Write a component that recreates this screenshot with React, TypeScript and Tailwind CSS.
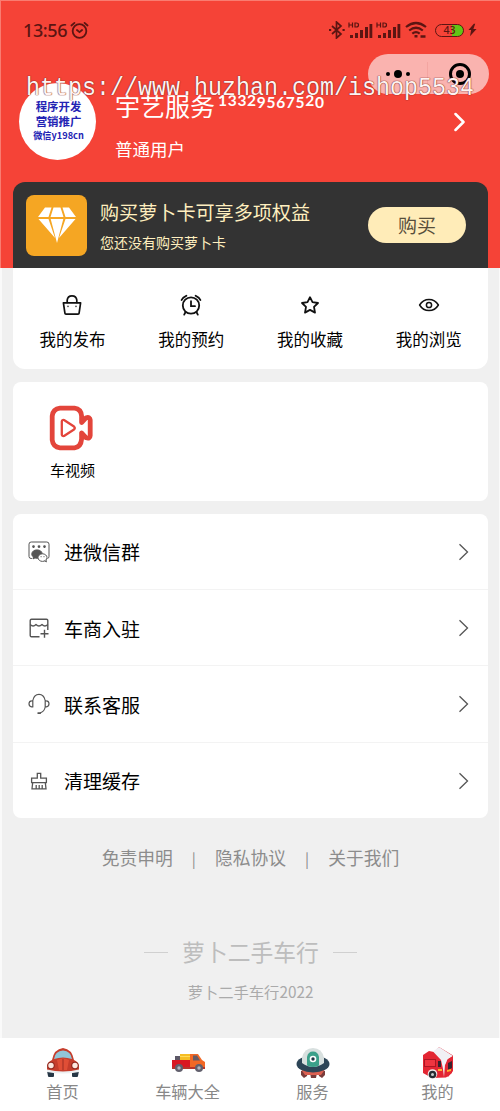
import type { ReactNode } from "react";

interface Entry {
  label: string;
  icon: ReactNode;
}

const shortcuts: Entry[] = [
  {
    label: "我的发布",
    icon: (
      <svg viewBox="0 0 22 22" className="w-[22px] h-[22px]" fill="none" stroke="#111" strokeWidth="1.7" strokeLinejoin="round" strokeLinecap="round">
        <path d="M2.4 8.800h17.200l-1.500 10.400q-.1 1-1.100 1H5q-1 0-1.100-1z" />
        <path d="M6.200 8.400V6.200Q6.600 1.800 11 1.800t4.800 4.400v2.200" />
        <path d="M7 12.200v.3M15 12.200v.3" strokeWidth="1.300" />
      </svg>
    ),
  },
  {
    label: "我的预约",
    icon: (
      <svg viewBox="0 0 22 22" className="w-[22px] h-[22px]" fill="none" stroke="#111" strokeWidth="1.8" strokeLinecap="round">
        <circle cx="11" cy="11.500" r="8.200" />
        <path d="M11 7.200v5h4M5.300 18.500 4.200 20.600M16.700 18.500l1.100 2.100M1.600 6 3.300 3.700 6.400 1.800M20.400 6l-1.700-2.300-3.100-1.900" />
      </svg>
    ),
  },
  {
    label: "我的收藏",
    icon: (
      <svg viewBox="0 0 22 22" className="w-[22px] h-[22px]" fill="none" stroke="#111" strokeWidth="1.800" strokeLinejoin="round">
        <path d="m11 3.200 2.500 5 5.500.8-4 3.900 1 5.700-5-2.700-5 2.700 1-5.700L3 9l5.500-.8z" />
      </svg>
    ),
  },
  {
    label: "我的浏览",
    icon: (
      <svg viewBox="0 0 22 22" className="w-[22px] h-[22px]" fill="none" stroke="#111" strokeWidth="1.500">
        <path d="M1.600 11Q5 5.400 11 5.400T20.400 11Q17 16.600 11 16.600T1.600 11z" strokeLinejoin="round" />
        <circle cx="11" cy="11" r="2.600" />
      </svg>
    ),
  },
];

const menu: Entry[] = [
  {
    label: "进微信群",
    icon: (
      <svg viewBox="0 0 22 22" className="w-[22px] h-[22px]" fill="none" stroke="#555" strokeWidth="1">
        <path d="M4 17.500H3.200Q1 17.500 1 15.400V3.200Q1 1 3.200 1h15.600Q21 1 21 3.200v12.200q0 1.800-1.500 2.100" />
        <path d="M5.500 4.300v2.600M4.200 5.600h2.600M11 4.300v2.600M9.700 5.600h2.600M16.500 4.300v2.600M15.200 5.600h2.600" strokeWidth="1.500" />
        <path d="M3.800 13.200C3.800 10.600 6 8.900 9 8.900s5.200 1.700 5.200 4c-3 0-4.700 1.600-4.500 4.400-1 .1-2-.1-2.700-.4l-2 1 .4-1.800c-1-.8-1.600-1.800-1.600-2.900z" fill="#555" />
        <ellipse cx="14.500" cy="16.600" rx="4.500" ry="3.800" fill="#fff" />
        <path d="m16.500 19.700 1.900 1.200-.4-2" fill="#fff" />
        <path d="M12.600 15.700h1M15.500 15.700h1" />
      </svg>
    ),
  },
  {
    label: "车商入驻",
    icon: (
      <svg viewBox="0 0 22 22" className="w-[22px] h-[22px]" fill="none" stroke="#555" strokeWidth="1.400" strokeLinejoin="round">
        <path d="M11.500 19.700H3.500q-1.300 0-1.300-1.300V3.600q0-1.300 1.300-1.300h15q1.300 0 1.300 1.300V13" />
        <path d="M2.200 7.500q2.900 3 5.800 0 2.900 3 6 0 2.900 3 5.800 0M16.500 12.700v8M12.500 16.700h8" />
      </svg>
    ),
  },
  {
    label: "联系客服",
    icon: (
      <svg viewBox="0 0 22 22" className="w-[22px] h-[22px]" fill="none" stroke="#555" strokeWidth="1.200" strokeLinecap="round">
        <path d="M4.800 7.500Q6 1.400 11 1.400t6.200 6.100M4.800 7.500v6.400H3.600Q1 13.500 1 10.800t2.600-3zM17.200 7.500v6.400h1.200q2.600-.4 2.600-3.100t-2.600-3zM17.200 14q-.9 4.500-4.700 5.700" strokeLinejoin="round" />
        <path d="M10.200 20.100h2" strokeWidth="1.900" />
      </svg>
    ),
  },
  {
    label: "清理缓存",
    icon: (
      <svg viewBox="0 0 22 22" className="w-[22px] h-[22px]" fill="none" stroke="#555" strokeWidth="1.300">
        <path d="M9.300 8.100V3.400h3.400v4.700h5.700v4.500H3.600V8.100zM4.700 12.600l-.7 6.200h14l-.7-6.200M8.200 18.800V15M11.200 18.800V15M14.200 18.800V15" />
      </svg>
    ),
  },
];

const tabs: Entry[] = [
  {
    label: "首页",
    icon: (
      <svg viewBox="0 0 36 32" className="w-9 h-8">
        <path d="M2 24h7v5q0 1-1 1H4q-1 0-1-1zM27 24h7l-1 5q0 1-1 1h-4q-1 0-1-1z" fill="#263746" />
        <path d="M7 13Q9 2 18 1q9 1 11 12 5 2 5 8v4H2v-4q0-6 5-8z" fill="#c63d2c" />
        <path d="M9 12q1-8 9-8.500 8 .5 9 8.500-9-3-18 0z" fill="#91c5d8" />
        <path d="M12 13q6-3 12 0l-2 10h-8z" fill="#e04e36" />
        <path d="M18 12v11" stroke="#9c2c22" />
        <circle cx="6" cy="18.500" r="3.800" fill="#8f281f" />
        <circle cx="30" cy="18.500" r="3.800" fill="#8f281f" />
        <circle cx="6" cy="18.500" r="2.700" fill="#fce8df" />
        <circle cx="30" cy="18.500" r="2.700" fill="#fce8df" />
        <path d="M2 22.600q16 4 32 0v2.300q-16 3-32 0z" fill="#edf0f2" />
      </svg>
    ),
  },
  {
    label: "车辆大全",
    icon: (
      <svg viewBox="0 0 36 32" className="w-9 h-8">
        <path d="M5 9h6v6H5z" fill="#5c5867" />
        <path d="M10 7h10v8H10z" fill="#f6bd23" />
        <path d="M10 9.500h10" stroke="#ffdc59" />
        <path d="M2 13h19v9H2z" fill="#d91822" />
        <path d="M20 7h8l4 6 3 2v7H20z" fill="#f26825" />
        <path d="M23 8.500h4l3 5h-7z" fill="#665b65" />
        <path d="M2 20h33v2H2z" fill="#b7352b" />
        <circle cx="9" cy="21" r="4" fill="#62606d" />
        <circle cx="29" cy="21" r="4" fill="#62606d" />
        <circle cx="9" cy="21" r="1.700" fill="#b3b4bc" />
        <circle cx="29" cy="21" r="1.700" fill="#b3b4bc" />
      </svg>
    ),
  },
  {
    label: "服务",
    icon: (
      <svg viewBox="0 0 36 32" className="w-9 h-8">
        <path d="M6 24h7l-1 5-3 2-3-3zM15 26h7l-1 5h-5zM23 24h7v4l-3 3-3-2z" fill="#793c3b" />
        <path d="M5 21h26l-5 7H10z" fill="#dc6051" />
        <ellipse cx="18" cy="17" rx="16.500" ry="8.500" fill="#2d4557" />
        <path d="M7 16V11Q9 1 18 1t11 10v5q-11 8-22 0z" fill="#d8e0df" />
        <path d="M12 18.500V10q1-5.500 6-5.500t6 5.500v8.500q-6 3-12 0z" fill="#3ba08a" />
        <circle cx="18" cy="12" r="3.300" fill="#fff" />
        <circle cx="18" cy="12" r="1.700" fill="#203747" />
      </svg>
    ),
  },
  {
    label: "我的",
    icon: (
      <svg viewBox="0 0 36 32" className="w-9 h-8">
        <path d="m3 8 6-4 5 1 5-5 14 8.500-1 17.500-6 4.500-14 .5-9-5z" fill="#e32633" />
        <path d="m13 4.500 6-4.500 14 9-5 3-3 6-1 12q-1-10-3-17z" fill="#f1f0f5" />
        <path d="M4 12h12v8H4z" fill="#ad1624" />
        <path d="M5 13h10v6H5z" fill="#ef3540" />
        <path d="m27 13 6-4v15l-5 6-3-3z" fill="#e32633" />
        <path d="m28 16 4-2v7l-4 2z" fill="#38232f" />
        <path d="M18 14h3v6h-3z" fill="#38232f" />
        <path d="M18 22h4v2h-4zM27 23l4-1v2l-4 1z" fill="#ffb12d" />
        <circle cx="12.500" cy="27" r="4.800" fill="#f5eced" />
        <circle cx="12.500" cy="27.500" r="3.800" fill="#262d32" />
        <circle cx="12.500" cy="27.500" r="1.500" fill="#c6cdce" />
      </svg>
    ),
  },
];

const Signal = () => (
  <svg viewBox="0 0 25 18" className="w-[25px] h-[18px]" fill="#5b1512">
    <path d="M2 14h3v3H2zM7 12h3v5H7zM12 9h3v8h-3zM17 6h3v11h-3zM21.500 3h2.800v14h-2.800z" />
    <path d="M1 1.500v5M4.500 1.500v5M1 4h3.500M7 2v4h1.200q2.300 0 2.300-2t-2.300-2z" fill="none" stroke="#5b1512" strokeWidth="1.200" />
  </svg>
);

const StatusBar = () => (
  <div className="flex h-[58px] items-center justify-between pl-[22px] pr-[23px] text-[#5b1512]">
    <div className="flex items-center gap-[3px]">
      <span className="font-['Noto_Sans',sans-serif] text-[18px] font-medium leading-none tracking-[-0.400px]">13:56</span>
      <svg viewBox="0 0 20 20" className="w-[19px] h-[19px]" fill="none" stroke="currentColor" strokeWidth="1.900" strokeLinecap="round">
        <circle cx="10" cy="10.500" r="7.200" />
        <path d="m7.300 9.500 2.700 2.200 2.700-2.200M1.500 4.700 4.700 2M18.500 4.700 15.300 2" />
      </svg>
    </div>
    <div className="flex items-center">
      <svg viewBox="0 0 18 18" className="w-[18px] h-[18px]" fill="none" stroke="currentColor" strokeWidth="1.700">
        <path d="m4 5 9 8-4.500 4V1L13 5l-9 8" />
        <path d="M1 9h2.200M14.500 9h2.200" strokeWidth="2.200" />
      </svg>
      <span className="ml-[2px] flex gap-[3px]">
        <Signal />
        <Signal />
      </span>
      <svg viewBox="0 0 22 18" className="ml-[4px] w-[22px] h-[18px]" fill="none" stroke="currentColor" strokeWidth="2.200">
        <path d="M1 6q10-8 20 0M4.200 9.500q6.800-5.500 13.600 0M7.300 12.700q3.700-3 7.400 0" />
        <path d="M11 14v2.500" strokeWidth="3" />
        <path d="M15.500 15.500h5" strokeWidth="2.500" />
      </svg>
      <span className="ml-[8px] flex h-[13px] w-[29px] items-center justify-center rounded-full border-[1.500px] border-[#5b1512] bg-linear-to-r from-transparent from-60% to-[#62c516] to-60% font-['Noto_Sans',sans-serif] text-[10.500px] font-medium leading-none">
        43
      </span>
      <svg viewBox="0 0 10 14" className="ml-[4px] w-[9px] h-[14px]" fill="currentColor">
        <path d="M6.500 0 .5 7h3L2.200 14 9.500 6H6l2-6z" />
      </svg>
    </div>
  </div>
);

const Capsule = () => (
  <div className="absolute left-[367px] top-[53px] flex h-10 w-[121px] items-center rounded-full bg-[#fab3af]">
    <div className="flex flex-1 items-center justify-center gap-[4px]">
      <i className="h-1 w-1 rounded-full bg-black" />
      <i className="h-2 w-2 rounded-full bg-black" />
      <i className="h-1 w-1 rounded-full bg-black" />
    </div>
    <div className="h-6 w-px bg-[#f3a5a1]" />
    <div className="flex flex-1 items-center justify-center pl-[2px]">
      <div className="flex h-[22px] w-[22px] items-center justify-center rounded-full border-[3px] border-black">
        <i className="h-2 w-2 rounded-full bg-black" />
      </div>
    </div>
  </div>
);

const Header = () => (
  <header className="relative h-[182px] border-t border-[#f97c71]">
    <StatusBar />
    <Capsule />
    <div className="mt-[24px] flex h-[77px] items-center pl-[18px] pr-[34px]">
      <div className="flex h-[77px] w-[77px] flex-col items-center justify-center rounded-full bg-white pb-[1px] pl-[2px] font-bold text-[#2323b4]">
        <p className="text-[11.400px] leading-[14.500px]">程序开发</p>
        <p className="text-[11.400px] leading-[14.500px]">营销推广</p>
        <p className="text-[9.200px] leading-[14.500px]">微信y198cn</p>
      </div>
      <div className="ml-[19px] flex-1 pt-[11px] text-white">
        <div className="flex h-11 items-center whitespace-nowrap text-[25px] leading-none">
          <span>宇艺服务</span>
          <span className="mb-[6px] ml-[3px] font-['Lato',sans-serif] text-[15.500px] font-bold tracking-[0.700px]">
            <span className="relative -top-[1px]">1332</span>
            <span className="relative top-[1px]">95675</span>
            <span className="relative -top-[1px]">2</span>
            <span className="relative top-[1px]">0</span>
          </span>
        </div>
        <p className="h-11 text-[17.500px] leading-[44px]">普通用户</p>
      </div>
      <svg viewBox="0 0 12 20" className="w-3 h-5" fill="none" stroke="#fff" strokeWidth="2.500" strokeLinecap="round" strokeLinejoin="round">
        <path d="m1.500 2 8 8-8 8" />
      </svg>
    </div>
    <p className="pointer-events-none absolute left-[25px] top-[74px] origin-top scale-y-[1.100] whitespace-nowrap font-['Liberation_Mono',monospace] text-[23.330px] leading-[24px] text-[#fff3f1] [text-shadow:0_0_1px_#702020,0_0_1px_#702020]">
      https://www.huzhan.com/ishop5534
    </p>
  </header>
);

const VipCard = () => (
  <div className="mx-auto flex h-[86px] w-[475px] items-center rounded-t-xl bg-[#333] pl-[13px] pr-[22px]">
    <div className="flex h-[61px] w-[61px] items-center justify-center rounded-lg bg-[#f5a623]">
      <svg viewBox="0 0 40 38" className="w-10 h-[38px]" fill="#fff">
        <path d="M8 1.500h6.500L11.500 11H1zM16.500 1.500h7L26.500 11h-13zM25.500 1.500H32L39 11H28.500zM1.500 13h10L18 32zM13.700 13h12.600L20 37zM28.500 13h10L22 32z" />
      </svg>
    </div>
    <div className="ml-[13px] flex-1 pt-[3px] text-[#ffefbf]">
      <p className="whitespace-nowrap text-[19.100px] leading-[30px]">购买萝卜卡可享多项权益</p>
      <p className="text-[14px] leading-[30px]">您还没有购买萝卜卡</p>
    </div>
    <button className="h-9 w-[98px] rounded-full bg-[#ffecb8] pt-[1px] text-[19px] text-[#574e3b]">购买</button>
  </div>
);

const VideoIcon = () => (
  <svg viewBox="0 0 44 46" className="mr-[3px] w-11 h-[46px]" fill="none" stroke="#e3453b" strokeLinejoin="round">
    <path d="M11 3.200h14.500Q32 4 32.600 11v6.500l4.600-4.800q3.800-1 4 2.300v15.500q-.2 3.500-4 2.300l-4.600-4.800v6Q32 42 25.500 42.800H11Q4 42 3.200 35V11Q4 4 11 3.200z" strokeWidth="4.800" />
    <path d="M12.800 16.500q.3-2 2.200-1.500l10 6.500q1.500 1.500 0 3L15 31q-1.900.500-2.200-1.500z" strokeWidth="2.300" />
  </svg>
);

const Footer = () => (
  <footer className="flex flex-col items-center">
    <div className="mt-[26px] flex h-7 items-center gap-[19px] text-[17.800px] leading-none text-[#8c8c8c]">
      <span>免责申明</span>
      <span className="text-[15px]">|</span>
      <span>隐私协议</span>
      <span className="text-[15px]">|</span>
      <span>关于我们</span>
    </div>
    <div className="mt-[60px] flex h-10 items-center gap-[14px] text-[22.800px] text-[#bdbdbd]">
      <i className="h-px w-6 bg-[#d0d0d0]" />
      <span>萝卜二手车行</span>
      <i className="h-px w-6 bg-[#d0d0d0]" />
    </div>
    <p className="mt-[5px] text-[15.300px] leading-[28px] text-[#aaa]">萝卜二手车行2022</p>
  </footer>
);

const App = () => {
  return (
    <div className="flex h-[1111px] w-[500px] flex-col overflow-hidden bg-[#f0f0f0] font-['Noto_Sans_CJK_SC',sans-serif] text-black">
      <div className="h-[268px] border-l border-[#f97c71] bg-[#f54337]">
        <Header />
        <VipCard />
      </div>

      <main className="flex-1 border-l-2 border-r border-[#fafafa] pl-[11px] pr-[11px]">
        <section className="grid h-[101px] grid-cols-4 rounded-b-xl bg-white">
          {shortcuts.map((item) => (
            <div key={item.label} className="flex flex-col items-center pt-[26px]">
              {item.icon}
              <span className="mt-[10px] text-[16.500px] leading-[26px]">{item.label}</span>
            </div>
          ))}
        </section>

        <section className="mt-[13px] h-[119px] rounded-lg bg-white">
          <div className="flex w-[119px] flex-col items-center pt-[23px]">
            <VideoIcon />
            <span className="mt-[7px] text-[15px] leading-[24px]">车视频</span>
          </div>
        </section>

        <section className="mt-[13px] h-[304px] divide-y divide-[#f3f3f3] rounded-lg bg-white">
          {menu.map((item) => (
            <div key={item.label} className="flex h-[76.200px] items-center pl-[15px] pr-[19px]">
              {item.icon}
              <span className="ml-[14px] flex-1 pt-[2px] text-[19px]">{item.label}</span>
              <svg viewBox="0 0 11 18" className="w-[11px] h-[18px]" fill="none" stroke="#555" strokeWidth="1.300">
                <path d="m1.500 1.300 8 7.700-8 7.700" />
              </svg>
            </div>
          ))}
        </section>

        <Footer />
      </main>

      <nav className="grid h-[73px] grid-cols-4 bg-white text-[#888]">
        {tabs.map((tab) => (
          <div key={tab.label} className="flex flex-col items-center pt-[9px]">
            {tab.icon}
            <span className="text-[16.200px] leading-[24px]">{tab.label}</span>
          </div>
        ))}
      </nav>
    </div>
  );
};

export default App;
